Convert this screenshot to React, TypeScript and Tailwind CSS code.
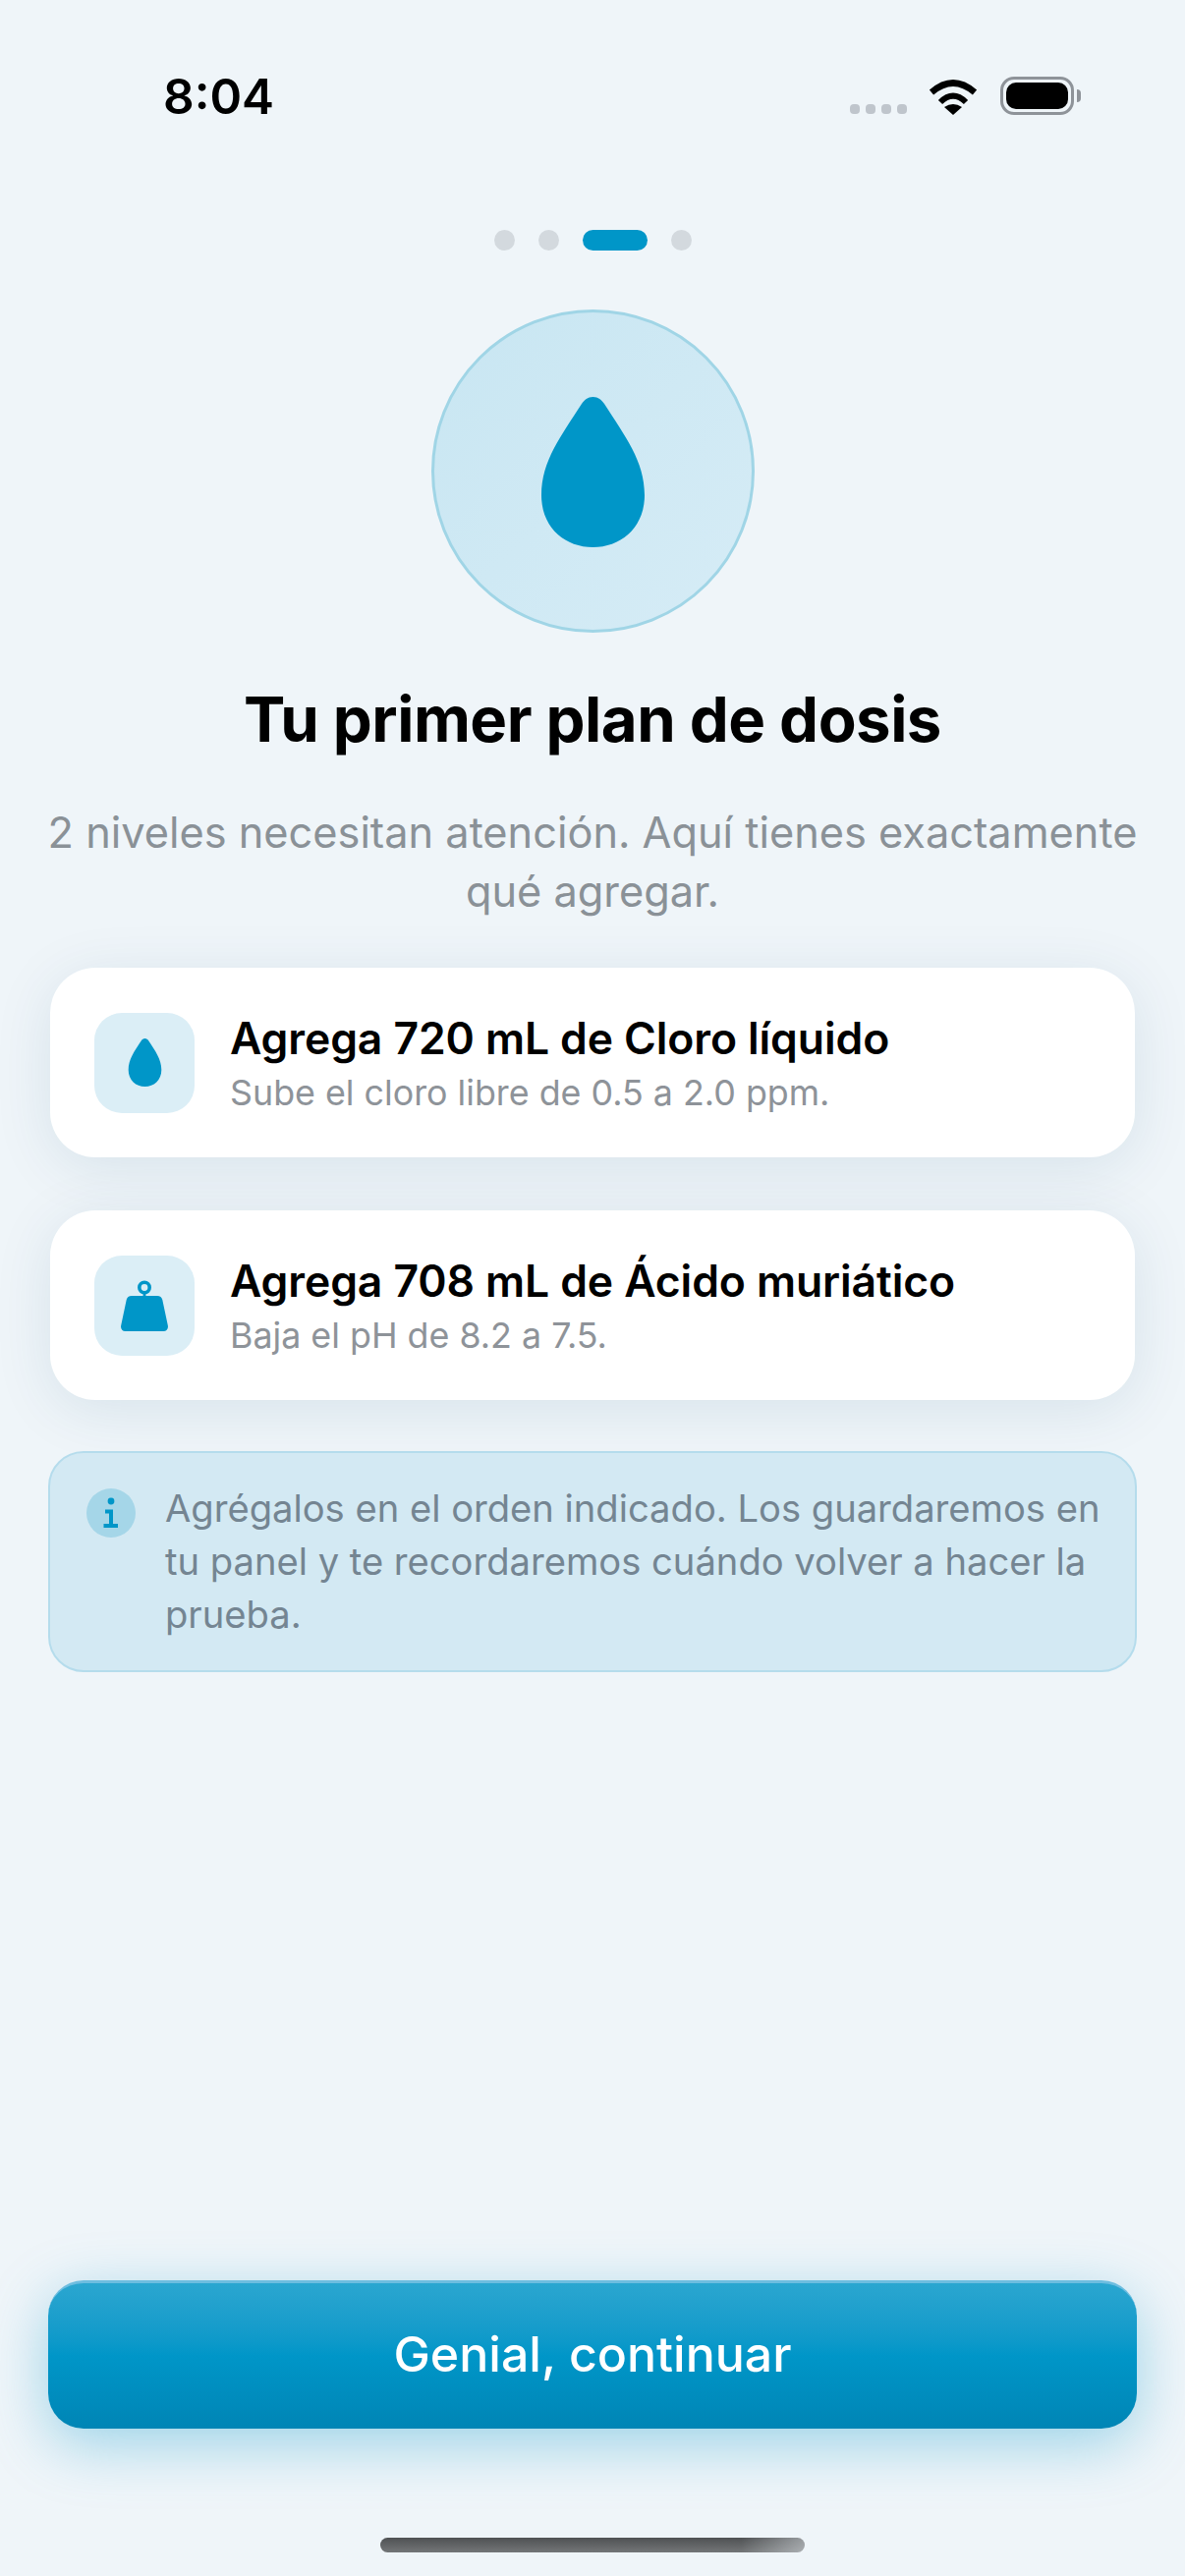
const Drop = ({ className }: { className: string }) => (
  <svg viewBox="0 0 105 153" className={className} fill="#0096c8">
    <path d="M52.5 0C47 0 44 3 41 7C20 40 0 65 0 100C0 133 24 153 52.5 153C81 153 105 133 105 100C105 65 85 40 64 7C61 3 58 0 52.5 0Z" />
  </svg>
);

const Weight = () => (
  <svg viewBox="0 0 48 52" className="w-[48px] h-[52px]" fill="#0096c8">
    <circle cx="24" cy="7.5" r="5.2" fill="none" stroke="#0096c8" strokeWidth="3.6" />
    <rect x="22.6" y="12" width="2.8" height="6" />
    <path d="M11 16H37C40 16 41.5 17.5 42.3 20L47.8 46C48.6 49.5 46.5 52 43.5 52H4.5C1.5 52 -0.6 49.5 0.2 46L5.7 20C6.5 17.5 8 16 11 16Z" />
  </svg>
);

const Card = ({ icon, title, sub }: { icon: React.ReactNode; title: string; sub: string }) => (
  <div className="h-[193px] rounded-[46px] bg-white shadow-[0_10px_60px_rgba(0,70,110,0.1)] flex items-center pl-[45px]">
    <div className="w-[102px] h-[102px] rounded-[28px] bg-[#dbeef6] flex items-center justify-center shrink-0">{icon}</div>
    <div className="ml-[36px] flex flex-col">
      <div className="text-[44.5px] leading-[54px] font-semibold text-black tracking-[-0.1px]">{title}</div>
      <div className="text-[35.8px] leading-[44px] mt-[6px] text-[#8e9399]">{sub}</div>
    </div>
  </div>
);

export default function App() {
  return (
    <div className="w-[1206px] h-[2622px] bg-[#eff5f9] flex flex-col overflow-hidden font-['Inter','Noto_Sans',sans-serif]">
      <div className="mt-[78px] h-[39px] pl-[166px] pr-[113px] flex items-center justify-between">
        <div className="text-[49.5px] leading-[39px] font-semibold text-black pt-[2px]">8:04</div>
        <div className="flex items-end">
          <div className="flex gap-[6px] mb-[1px]">
            <div className="w-[10px] h-[10px] rounded-[4px] bg-[#bfc5cc]" />
            <div className="w-[10px] h-[10px] rounded-[4px] bg-[#bfc5cc]" />
            <div className="w-[10px] h-[10px] rounded-[4px] bg-[#bfc5cc]" />
            <div className="w-[10px] h-[10px] rounded-[4px] bg-[#bfc5cc]" />
          </div>
          <svg viewBox="0 0 50 38" className="w-[50px] h-[38px] ml-[22px]" fill="none" stroke="#000">
            <path d="M3 15Q25 -4 47 15" strokeWidth="6.5" />
            <path d="M12 25Q25 12 38 25" strokeWidth="6" />
            <path d="M16 30Q25 24 34 30L25 38Z" fill="#000" stroke="none" />
          </svg>
          <div className="ml-[23px] w-[75px] h-[39px] rounded-[14px] border-[3px] border-[#8e9399] p-[3px] relative">
            <div className="w-full h-full rounded-[10px] bg-black" />
            <div className="absolute -right-[10px] top-[10px] w-[4px] h-[13px] rounded-r-[4px] bg-[#8e9399]" />
          </div>
        </div>
      </div>

      <div className="mt-[117px] flex justify-center items-center gap-[24px]">
        <div className="w-[21px] h-[21px] rounded-full bg-[#d3d9de]" />
        <div className="w-[21px] h-[21px] rounded-full bg-[#d3d9de]" />
        <div className="w-[66px] h-[21px] rounded-full bg-[#0096c8]" />
        <div className="w-[21px] h-[21px] rounded-full bg-[#d3d9de]" />
      </div>

      <div className="mt-[60px] mx-auto w-[329px] h-[329px] rounded-full border-[3px] border-[#a0d5e6] bg-gradient-to-br from-[#c8e6f2] to-[#d6ecf6] flex items-center justify-center shrink-0">
        <Drop className="w-[105px] h-[153px] mt-[1px]" />
      </div>

      <h1 className="mt-[52px] text-center text-[63.5px] leading-[72px] font-bold text-black tracking-[-0.5px]">Tu primer plan de dosis</h1>
      <p className="mt-[49px] mx-[30px] text-center text-[43.3px] leading-[60px] text-[#8a9197]">
        2 niveles necesitan atención. Aquí tienes exactamente qué agregar.
      </p>

      <div className="mt-[48px] mx-[51px] flex flex-col gap-[54px]">
        <Card icon={<Drop className="w-[35px] h-[49px]" />} title="Agrega 720 mL de Cloro líquido" sub="Sube el cloro libre de 0.5 a 2.0 ppm." />
        <Card icon={<Weight />} title="Agrega 708 mL de Ácido muriático" sub="Baja el pH de 8.2 a 7.5." />
      </div>

      <div className="mt-[52px] mx-[49px] h-[225px] rounded-[36px] border-2 border-[#b5dcec] bg-[#d3e9f3] flex items-start pl-[37px] pr-[24px] pt-[29px]">
        <div className="mt-[7px] w-[50px] h-[50px] rounded-full bg-[#a5d6e8] flex items-center justify-center shrink-0">
          <svg viewBox="0 0 16 32" className="w-[16px] h-[32px]" fill="#0096c8">
            <circle cx="8" cy="4" r="3.4" />
            <path d="M2 12.5H10V27H15V31H0.5V27H6V16.5H2Z" />
          </svg>
        </div>
        <p className="ml-[30px] text-[38.15px] leading-[54px] text-[#748592]">
          Agrégalos en el orden indicado. Los guardaremos en tu panel y te recordaremos cuándo volver a hacer la prueba.
        </p>
      </div>

      <div className="flex-1" />

      <button className="mx-[49px] h-[151px] rounded-[36px] border-t-[3px] border-[#6dbde0] bg-gradient-to-b from-[#2aa6d0] via-[#0096c8] to-[#0085b5] shadow-[0_16px_60px_rgba(0,150,200,0.35)] text-white text-[50px] font-medium pb-[3px]">
        Genial, continuar
      </button>

      <div className="mt-[111px] mb-[24px] mx-auto w-[432px] h-[15px] rounded-full bg-[linear-gradient(90deg,transparent_85%,rgba(239,245,250,0.45)_100%),linear-gradient(180deg,#4f5153,#737678)]" />
    </div>
  );
}
